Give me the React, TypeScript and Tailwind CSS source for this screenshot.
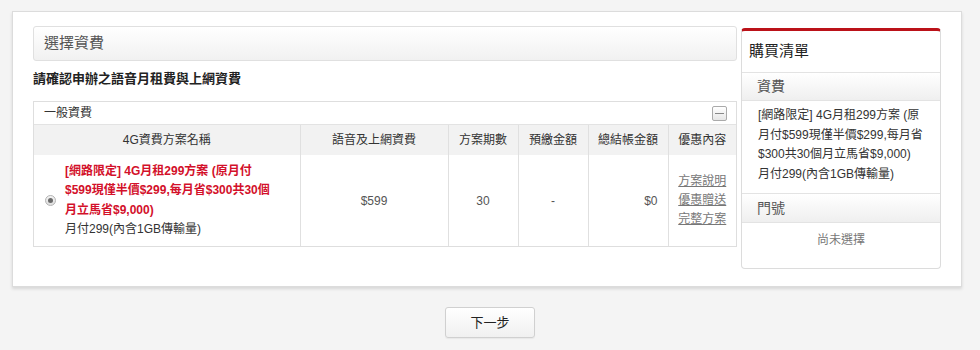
import React from "react";

const font = { fontFamily: '"Liberation Sans", "Noto Sans CJK TC", Arial, sans-serif' };

export default function App() {
  return (
    <div className="min-h-[350px] w-[980px] bg-[#f4f4f4] pt-[11px] text-[#333]" style={font}>
      <div className="ml-[12px] w-[950px] border border-[#dcdcdc] bg-white px-[20px] pt-[14px] pb-[17px] shadow-[0_2px_3px_rgba(0,0,0,0.12)]">
        <div className="flex gap-[4px]">
          {/* left column */}
          <div className="w-[704px]">
            <div className="flex h-[35px] items-center rounded-[3px] border border-[#e0e0e0] bg-gradient-to-b from-white to-[#f1f1f1] pl-[10px] text-[15px] text-[#555]">
              選擇資費
            </div>
            <div className="mt-[9px] h-[18px] text-[13px] font-bold leading-[18px] text-[#222]">
              請確認申辦之語音月租費與上網資費
            </div>
            <div className="mt-[13px] border border-[#dedede]">
              <div className="flex h-[23px] items-center justify-between border-b border-[#e3e3e3] pl-[10px] pr-[9px] text-[12px] text-[#333]">
                <span>一般資費</span>
                <span className="flex h-[15px] w-[15px] items-center justify-center rounded-[2px] border border-[#aaa] bg-gradient-to-b from-white to-[#e6e6e6]">
                  <span className="block h-px w-[9px] bg-[#888]" />
                </span>
              </div>
              <table className="w-full border-collapse text-[12px] text-[#333]">
                <colgroup>
                  <col className="w-[266px]" />
                  <col className="w-[148px]" />
                  <col className="w-[70px]" />
                  <col className="w-[70px]" />
                  <col className="w-[80px]" />
                  <col className="w-[68px]" />
                </colgroup>
                <thead>
                  <tr className="h-[30px] bg-[#f2f2f2]">
                    <th className="border-r border-[#e0e0e0] font-normal">4G資費方案名稱</th>
                    <th className="border-r border-[#e0e0e0] font-normal">語音及上網資費</th>
                    <th className="border-r border-[#e0e0e0] font-normal">方案期數</th>
                    <th className="border-r border-[#e0e0e0] font-normal">預繳金額</th>
                    <th className="border-r border-[#e0e0e0] font-normal">總結帳金額</th>
                    <th className="font-normal">優惠內容</th>
                  </tr>
                </thead>
                <tbody>
                  <tr className="h-[91px]">
                    <td className="border-r border-[#e0e0e0] pl-[11px] pr-[6px]">
                      <div className="flex items-center">
                        <span className="mr-[9px] flex h-[11px] w-[11px] shrink-0 items-center justify-center rounded-full border border-[#b5b5b5] bg-gradient-to-b from-[#f4f4f4] to-[#dedede]">
                          <span className="block h-[5px] w-[5px] rounded-full bg-[#6a6a6a]" />
                        </span>
                        <div className="leading-[19.5px]">
                          <div className="font-bold text-[#d3102a]">
                            [網路限定] 4G月租299方案 (原月付<br />$599現僅半價$299,每月省$300共30個<br />月立馬省$9,000)
                          </div>
                          <div>月付299(內含1GB傳輸量)</div>
                        </div>
                      </div>
                    </td>
                    <td className="border-r border-[#e0e0e0] text-center text-[#555]">$599</td>
                    <td className="border-r border-[#e0e0e0] text-center text-[#555]">30</td>
                    <td className="border-r border-[#e0e0e0] text-center text-[#555]">-</td>
                    <td className="border-r border-[#e0e0e0] pr-[10px] text-right text-[#555]">$0</td>
                    <td className="text-center leading-[19px] text-[#777]">
                      <div className="underline">方案說明</div>
                      <div className="underline">優惠贈送</div>
                      <div className="underline">完整方案</div>
                    </td>
                  </tr>
                </tbody>
              </table>
            </div>
          </div>

          {/* sidebar */}
          <div className="mt-[2px] w-[200px] overflow-hidden rounded-[4px] border border-t-[3px] border-[#dcdcdc] border-t-[#bb1219] bg-white">
            <div className="flex h-[41px] items-center pl-[7px] text-[15px] text-[#222]">購買清單</div>
            <div className="flex h-[29px] items-center border-t border-b border-[#e3e3e3] bg-gradient-to-b from-white to-[#efefef] pl-[15px] text-[14px] text-[#555]">
              資費
            </div>
            <div className="px-[16px] pt-[5px] pb-[9px] text-[12px] leading-[19.5px] text-[#333]">
              [網路限定] 4G月租299方案 (原<br />月付$599現僅半價$299,每月省<br />$300共30個月立馬省$9,000)<br />月付299(內含1GB傳輸量)
            </div>
            <div className="flex h-[30px] items-center border-t border-b border-[#e3e3e3] bg-gradient-to-b from-white to-[#efefef] pl-[15px] text-[14px] text-[#555]">
              門號
            </div>
            <div className="pt-[8px] pb-[18px] text-center text-[12px] leading-[19px] text-[#777]">尚未選擇</div>
          </div>
        </div>
      </div>
      <div className="mt-[20px] flex justify-center">
        <button className="h-[31px] w-[90px] rounded-[3px] border border-[#d0d0d0] bg-gradient-to-b from-white to-[#f0f0f0] text-[13px] text-[#222] shadow-[0_1px_1px_rgba(0,0,0,0.05)]">
          下一步
        </button>
      </div>
    </div>
  );
}
